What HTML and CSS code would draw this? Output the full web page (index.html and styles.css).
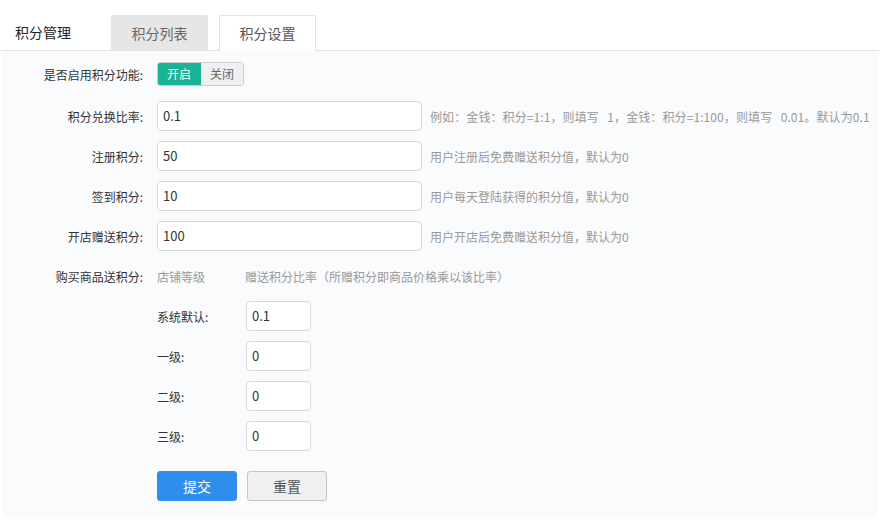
FILE: index.html
```html
<!DOCTYPE html>
<html lang="zh">
<head>
<meta charset="utf-8">
<link rel="stylesheet" href="styles.css">
</head>
<body>
<div class="header">
  <div class="title">积分管理</div>
  <div class="tabs">
    <div class="tab">积分列表</div>
    <div class="tab active">积分设置</div>
  </div>
</div>
<div class="content">
  <div class="row row-first">
    <div class="label">是否启用积分功能:</div>
    <div class="toggle"><span class="on">开启</span><span class="off">关闭</span></div>
  </div>
  <div class="row">
    <div class="label">积分兑换比率:</div>
    <div class="input wide">0.1</div>
    <div class="hint wide-hint">例如：金钱：积分=1:1，则填写&nbsp;&nbsp;&nbsp;1，金钱：积分=1:100，则填写&nbsp;&nbsp;&nbsp;0.01。默认为0.1</div>
  </div>
  <div class="row">
    <div class="label">注册积分:</div>
    <div class="input wide">50</div>
    <div class="hint">用户注册后免费赠送积分值，默认为0</div>
  </div>
  <div class="row">
    <div class="label">签到积分:</div>
    <div class="input wide">10</div>
    <div class="hint">用户每天登陆获得的积分值，默认为0</div>
  </div>
  <div class="row">
    <div class="label">开店赠送积分:</div>
    <div class="input wide">100</div>
    <div class="hint">用户开店后免费赠送积分值，默认为0</div>
  </div>
  <div class="row">
    <div class="label">购买商品送积分:</div>
    <div class="sub-head"><span class="col1">店铺等级</span><span>赠送积分比率（所赠积分即商品价格乘以该比率）</span></div>
  </div>
  <div class="row">
    <div class="label"></div>
    <div class="sublabel">系统默认:</div>
    <div class="input small">0.1</div>
  </div>
  <div class="row">
    <div class="label"></div>
    <div class="sublabel">一级:</div>
    <div class="input small">0</div>
  </div>
  <div class="row">
    <div class="label"></div>
    <div class="sublabel">二级:</div>
    <div class="input small">0</div>
  </div>
  <div class="row">
    <div class="label"></div>
    <div class="sublabel">三级:</div>
    <div class="input small">0</div>
  </div>
  <div class="row buttons">
    <div class="label"></div>
    <div class="btn primary">提交</div>
    <div class="btn default">重置</div>
  </div>
</div>
</body>
</html>
```
FILE: styles.css
```css
* { box-sizing: border-box; }
body {
  margin: 0;
  font-family: "Noto Sans CJK SC", "Noto Sans", sans-serif;
  font-size: 12px;
  color: #333;
  background: #fff;
}
.header {
  height: 51px;
  display: flex;
  align-items: flex-end;
  border-bottom: 1px solid #e3e3e3;
  background: #fff;
}
.title {
  width: 111px;
  padding-left: 15px;
  font-size: 14px;
  line-height: 35px;
  color: #222;
}
.tabs {
  display: flex;
  gap: 11px;
  margin-bottom: -1px;
}
.tab {
  width: 97px;
  height: 36px;
  line-height: 35px;
  text-align: center;
  font-size: 14px;
  color: #666;
  background: #e6e6e6;
  border: 1px solid #e6e6e6;
  border-bottom: none;
  border-radius: 2px 2px 0 0;
}
.tab.active {
  background: #fff;
  border-color: #e3e3e3;
  color: #555;
}
.content {
  background: #fafbfd;
  margin: 0 2px;
  padding-top: 8px;
  height: 466px;
}
.row {
  display: flex;
  align-items: center;
  height: 30px;
  margin-bottom: 10px;
}
.row-first { margin-bottom: 12px; }
.label {
  width: 141px;
  text-align: right;
  margin-right: 14px;
  color: #333;
  flex: none;
}
.toggle {
  display: flex;
  height: 24px;
  border-radius: 3px;
  overflow: hidden;
  border: 1px solid #c9cdd0;
}
.toggle span {
  text-align: center;
}
.toggle .on {
  background: #1ab394;
  color: #fff;
  margin: -1px 0 -1px -1px;
  line-height: 24px;
  width: 44px;
}
.toggle .off {
  width: 42px;
  line-height: 22px;
  background: #eef0f1;
  color: #666;
}
.input {
  height: 30px;
  line-height: 28px;
  border: 1px solid #d9d9d9;
  border-radius: 4px;
  background: #fff;
  padding-left: 5px;
  font-size: 13px;
  color: #333;
  flex: none;
}
.input.wide { width: 265px; }
.input.small { width: 65px; }
.hint {
  margin-left: 8px;
  color: #999;
  white-space: nowrap;
}
.wide-hint { letter-spacing: 0.1px; }
.sub-head { color: #999; white-space: nowrap; }
.sub-head .col1 { display: inline-block; width: 88px; }
.sublabel {
  width: 89px;
  color: #333;
  flex: none;
}
.buttons { margin-top: 20px; }
.btn {
  width: 80px;
  height: 30px;
  line-height: 28px;
  text-align: center;
  font-size: 14px;
  border-radius: 3px;
  flex: none;
}
.btn.primary {
  background: #2e8ded;
  border: 1px solid #2e8ded;
  color: #fff;
  margin-right: 10px;
}
.btn.default {
  background: #eef0f1;
  border: 1px solid #c4c6c8;
  color: #555;
}
```
